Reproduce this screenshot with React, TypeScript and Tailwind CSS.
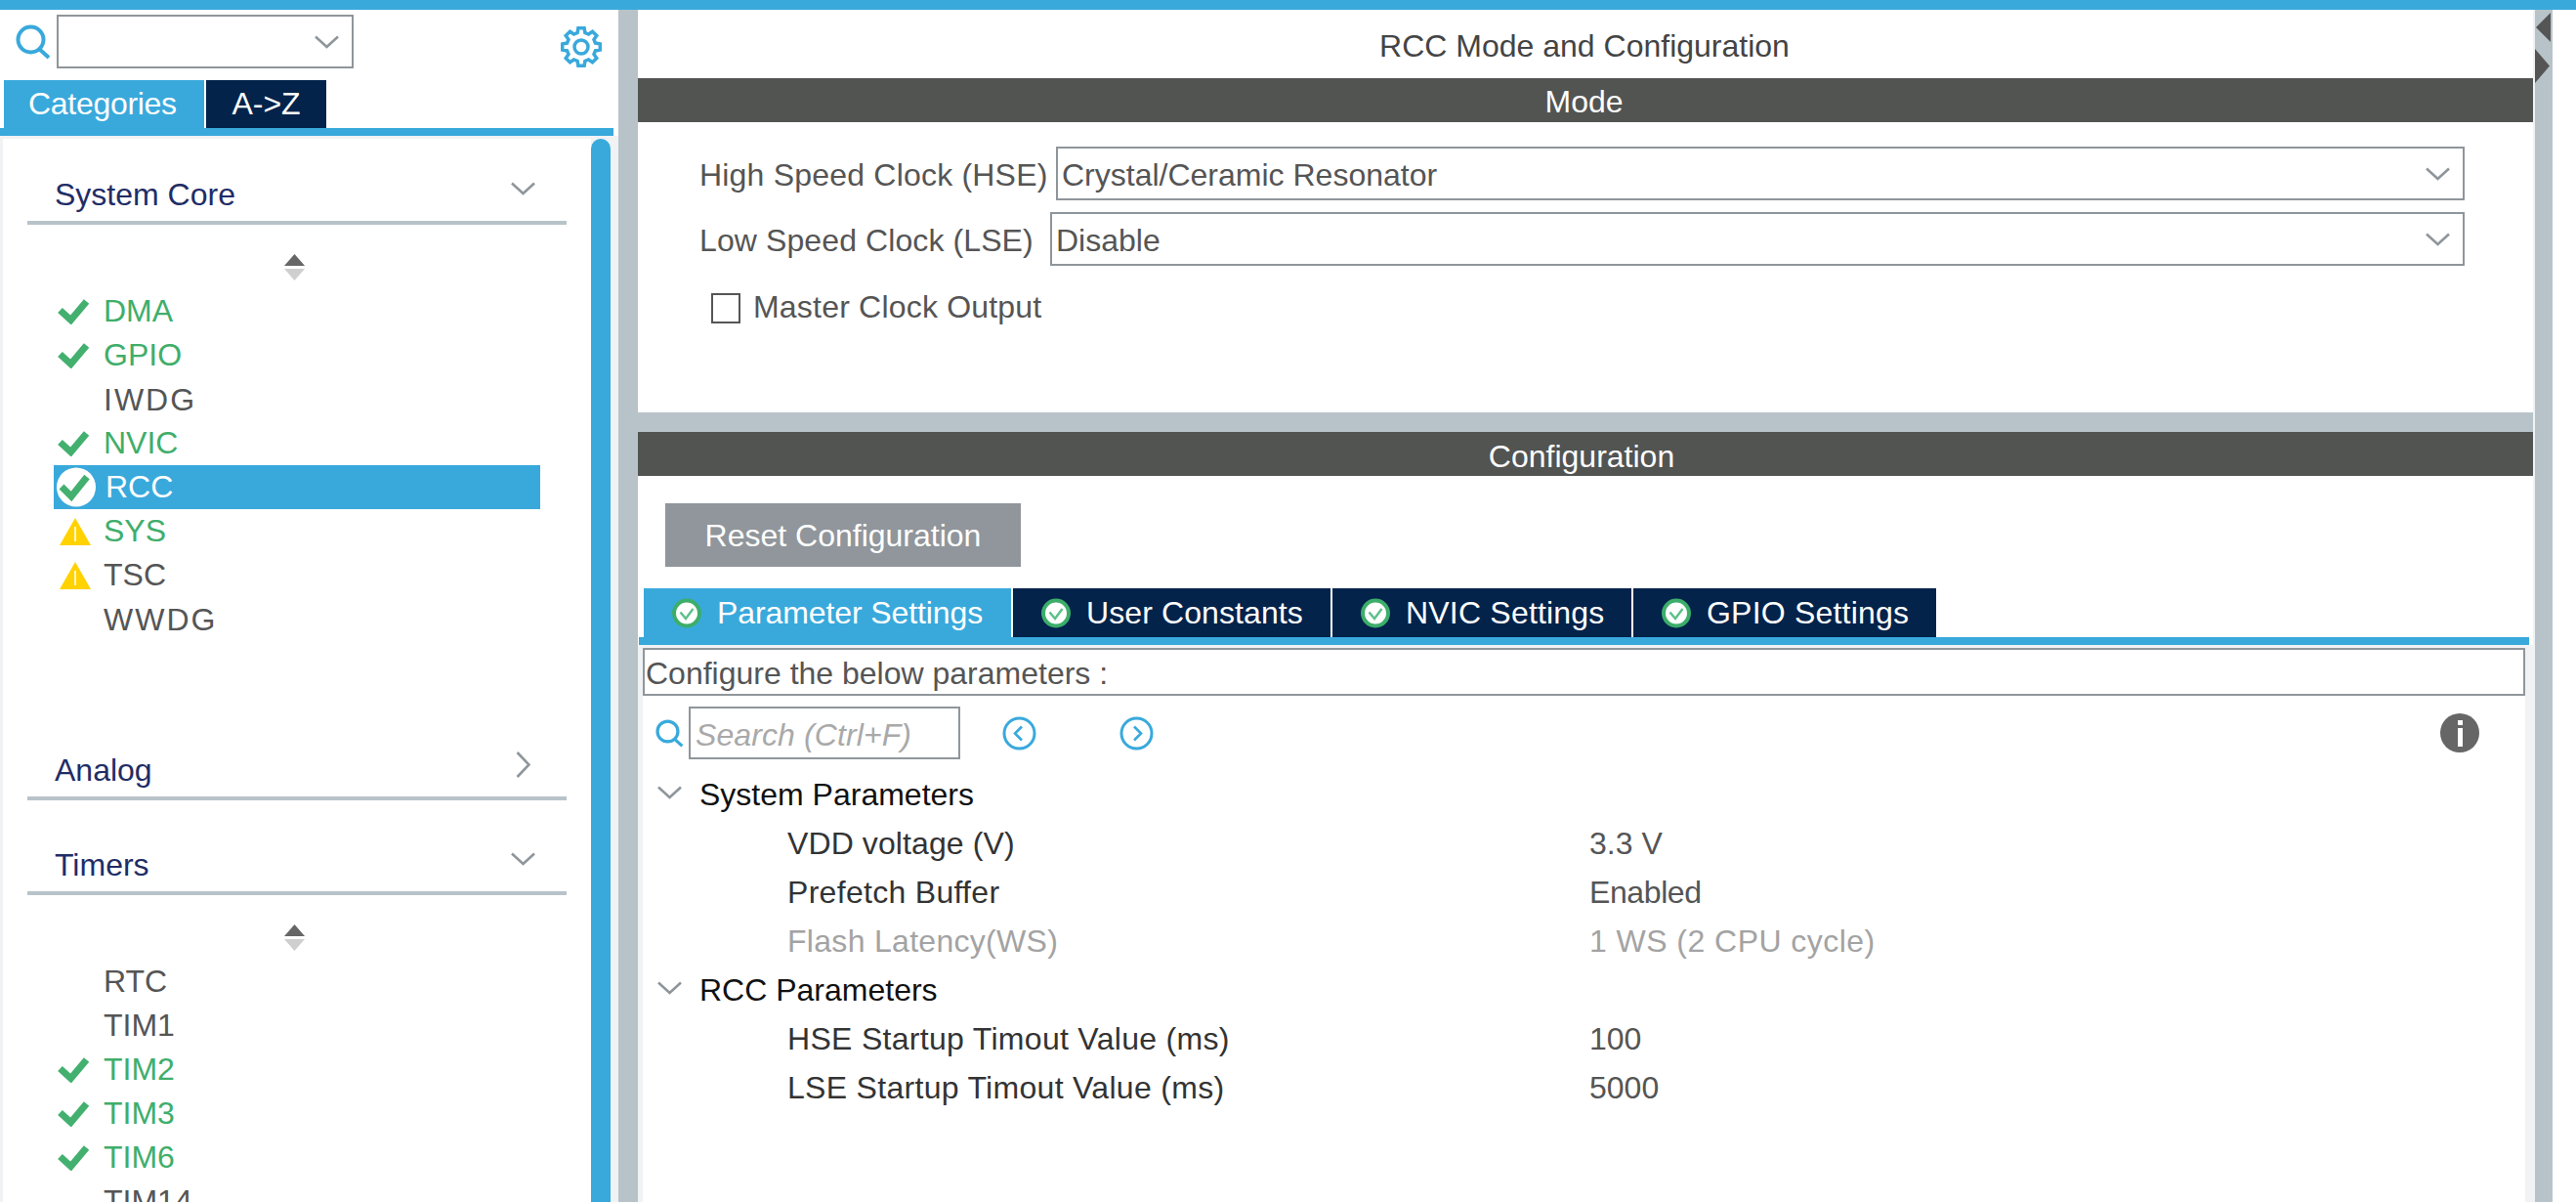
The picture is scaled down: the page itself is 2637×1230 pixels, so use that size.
const CHECK_GREEN = "#43b06f";

interface Peripheral {
  name: string;
  status?: "ok" | "warn" | "selected";
  green?: boolean;
  wide?: boolean;
}

const CORE: Peripheral[] = [
  { name: "DMA", status: "ok", green: true },
  { name: "GPIO", status: "ok", green: true },
  { name: "IWDG", wide: true },
  { name: "NVIC", status: "ok", green: true },
  { name: "RCC", status: "selected" },
  { name: "SYS", status: "warn", green: true },
  { name: "TSC", status: "warn" },
  { name: "WWDG", wide: true },
];

const TIMERS: Peripheral[] = [
  { name: "RTC" },
  { name: "TIM1" },
  { name: "TIM2", status: "ok", green: true },
  { name: "TIM3", status: "ok", green: true },
  { name: "TIM6", status: "ok", green: true },
  { name: "TIM14" },
];

// 8 tooth gear outline, centred on 21,21
const GEAR_POINTS = Array.from({ length: 8 }, (_, i) => {
  const a = (i * Math.PI) / 4;
  const at = (r: number, d: number) => {
    const t = a + (d * Math.PI) / 180;
    return `${(21 + r * Math.cos(t)).toFixed(1)},${(21 + r * Math.sin(t)).toFixed(1)}`;
  };
  return [at(15, -15), at(19.5, -9), at(19.5, 9), at(15, 15)].join(" ");
}).join(" ");

function Gear() {
  return (
    <svg viewBox="0 0 42 42" className="w-[42px] h-[42px] shrink-0" fill="none" stroke="#39a9dc" strokeWidth="3.5">
      <polygon points={GEAR_POINTS} />
      <circle cx="21" cy="21" r="7" />
    </svg>
  );
}

function Chevron({ className = "" }: { className?: string }) {
  return (
    <svg viewBox="0 0 25 14" className={`w-[25px] h-[14px] shrink-0 ${className}`} fill="none" stroke="#8f969b" strokeWidth="2.6">
      <path d="M1 1.5 12.5 12 24 1.5" />
    </svg>
  );
}

function SearchIcon({ className = "" }: { className?: string }) {
  return (
    <svg viewBox="0 0 36 36" className={`shrink-0 ${className}`} fill="none" stroke="#39a9dc">
      <circle cx="15.5" cy="15.5" r="13" strokeWidth="4" />
      <path d="M24 25 34 34" strokeWidth="4" />
    </svg>
  );
}

function Check() {
  return (
    <svg viewBox="0 0 32 26" className="w-[32px] h-[26px]" fill="none" stroke={CHECK_GREEN} strokeWidth="7">
      <path d="M2.5 11.5 13.5 21.5 29.5 2.5" />
    </svg>
  );
}

function Warn() {
  return (
    <svg viewBox="0 0 32 28" className="w-[32px] h-[28px]">
      <path d="M16 0 32 28H0Z" fill="#ffd200" />
      <path d="M16 9v15" stroke="#fff" strokeWidth="1.6" />
    </svg>
  );
}

function SelectedCheck() {
  return (
    <svg viewBox="0 0 40 41" className="w-[40px] h-[41px]" fill="none">
      <circle cx="20" cy="20.5" r="20" fill="#fff" />
      <path d="M5 20 15 30 31 10" stroke={CHECK_GREEN} strokeWidth="7" />
    </svg>
  );
}

function TabCheck() {
  return (
    <svg viewBox="0 0 30 31" className="w-[30px] h-[31px] shrink-0" fill="none">
      <circle cx="15" cy="15.5" r="13" fill="#fff" stroke="#3cae6a" strokeWidth="4" />
      <path d="M8.5 14.5 14 21 21.5 11" stroke="#5cc08a" strokeWidth="2.4" />
    </svg>
  );
}

function SortArrows() {
  return (
    <svg viewBox="0 0 21 27" className="w-[21px] h-[27px] block">
      <path d="M10.5 0 21 12H0Z" fill="#666" />
      <path d="M0 15H21L10.5 27Z" fill="#cfcfcf" />
    </svg>
  );
}

function Row({ item }: { item: Peripheral }) {
  const selected = item.status === "selected";
  const color = selected ? "text-white" : item.green ? "text-[#3fae6b]" : "text-[#555]";
  return (
    <div className={`flex items-center h-[45px] w-[498px] ${selected ? "bg-[#39a9dc]" : ""}`}>
      <div className={`w-[51px] shrink-0 flex items-center ${item.status === "warn" ? "pl-[6px]" : "pl-[4px]"}`}>
        {item.status === "ok" && <Check />}
        {item.status === "warn" && <Warn />}
        {selected && <div className="-ml-[1px]"><SelectedCheck /></div>}
      </div>
      <span className={`${color} ${selected ? "pl-[2px]" : ""} ${item.wide ? "tracking-[2px] pt-[2px]" : ""}`}>{item.name}</span>
    </div>
  );
}

function SectionHead({ title, open, className = "" }: { title: string; open: boolean; className?: string }) {
  return (
    <div className={`h-[50px] pb-[10px] pl-[28px] pr-[32px] border-b-4 border-[#b8c3c9] flex items-center justify-between text-[#1f2d66] ${className}`}>
      <span className="pt-[2px]">{title}</span>
      {open ? (
        <Chevron className="-mt-[10px]" />
      ) : (
        <svg viewBox="0 0 15 27" className="w-[15px] h-[27px] mr-[5px] -mt-[10px]" fill="none" stroke="#8f969b" strokeWidth="2.6">
          <path d="M1.5 1 13.5 13.5 1.5 26" />
        </svg>
      )}
    </div>
  );
}

function Sidebar() {
  return (
    <aside className="w-[633px] shrink-0 flex flex-col">
      <div className="h-[72px] flex items-start pt-[5px] pl-[16px]">
        <SearchIcon className="w-[36px] h-[36px] mt-[10px]" />
        <div className="ml-[6px] w-[304px] h-[55px] border-2 border-[#8f969b] flex items-center justify-end pr-[13px]">
          <Chevron />
        </div>
        <div className="ml-auto mr-[17px] mt-[12px]"><Gear /></div>
      </div>
      <div className="h-[49px] pl-[4px] flex gap-[2px] text-white">
        <div className="w-[205px] bg-[#39a9dc] flex items-center pl-[25px] -tracking-[0.3px]">Categories</div>
        <div className="w-[123px] bg-[#03234b] flex items-center justify-center">A-&gt;Z</div>
      </div>
      <div className="h-[8px] w-[628px] bg-[#39a9dc]" />
      <div className="flex-1 min-h-0 bg-[#f0f2f4] pt-[3px] pl-[3px] pr-[8px] flex">
        <div className="flex-1 bg-white overflow-hidden pl-[25px] pt-[38px]">
          <div className="w-[552px]">
            <SectionHead title="System Core" open />
            <div className="mt-[30px] mb-[9px] pl-[263px]"><SortArrows /></div>
            <div className="pl-[27px]">
              {CORE.map((p) => <Row key={p.name} item={p} />)}
            </div>
            <SectionHead title="Analog" open={false} className="mt-[113px]" />
            <SectionHead title="Timers" open className="mt-[47px]" />
            <div className="mt-[30px] mb-[9px] pl-[263px]"><SortArrows /></div>
            <div className="pl-[27px]">
              {TIMERS.map((p) => <Row key={p.name} item={p} />)}
            </div>
          </div>
        </div>
        <div className="w-[20px] bg-[#39a9dc] rounded-t-[10px]" />
      </div>
    </aside>
  );
}

function SelectBox({ value, className = "" }: { value: string; className?: string }) {
  return (
    <div className={`h-[55px] border-2 border-[#8f969b] flex items-center justify-between pl-[4px] pr-[13px] ${className}`}>
      <span className="pt-[3px]">{value}</span>
      <Chevron />
    </div>
  );
}

const TABS = [
  { label: "Parameter Settings", width: "w-[376px]", bg: "bg-[#39a9dc]", text: "-tracking-[0.1px]" },
  { label: "User Constants", width: "w-[325px]", bg: "bg-[#03234b]", text: "tracking-[0.1px]" },
  { label: "NVIC Settings", width: "w-[306px]", bg: "bg-[#03234b]", text: "tracking-[0.2px]" },
  { label: "GPIO Settings", width: "w-[310px]", bg: "bg-[#03234b]", text: "tracking-[0.2px]" },
];

function ParamRow({ label, value, muted, labelClass = "tracking-[0.3px]", valueClass = "" }: { label: string; value: string; muted?: boolean; labelClass?: string; valueClass?: string }) {
  return (
    <div className={`h-[50px] flex items-center pl-[148px] ${muted ? "text-[#a3a3a3]" : "text-[#333]"}`}>
      <span className={`w-[821px] ${labelClass}`}>{label}</span>
      <span className={`${muted ? "" : "text-[#555]"} ${valueClass}`}>{value}</span>
    </div>
  );
}

function GroupRow({ label }: { label: string }) {
  return (
    <div className="h-[50px] flex items-center pl-[15px] gap-[18px] text-[#111]">
      <Chevron className="-mt-[4px]" />
      <span>{label}</span>
    </div>
  );
}

function CircleArrow({ dir }: { dir: "left" | "right" }) {
  return (
    <svg viewBox="0 0 35 35" className="w-[35px] h-[35px] shrink-0" fill="none" stroke="#39a9dc">
      <circle cx="17.5" cy="17.5" r="15.5" strokeWidth="3" />
      <path d={dir === "left" ? "M20 10.5 13 17.5 20 24.5" : "M15 10.5 22 17.5 15 24.5"} strokeWidth="2.6" />
    </svg>
  );
}

function Main() {
  return (
    <main className="w-[1942px] shrink-0 border-r-2 border-[#f0f2f4] flex flex-col">
      <div className="h-[70px] pt-[4px] pr-[2px] flex items-center justify-center text-[#444]">RCC Mode and Configuration</div>
      <div className="h-[45px] pt-[3px] pr-[3px] bg-[#525452] text-white flex items-center justify-center">Mode</div>
      <section className="h-[297px] pt-[25px] pr-[70px] text-[#555]">
        <div className="flex items-center pl-[63px]">
          <span className="w-[365px] shrink-0 pt-[3px] tracking-[0.2px]">High Speed Clock (HSE)</span>
          <SelectBox value="Crystal/Ceramic Resonator" className="flex-1" />
        </div>
        <div className="mt-[12px] flex items-center pl-[63px]">
          <span className="w-[359px] shrink-0 pt-[3px] tracking-[0.1px]">Low Speed Clock (LSE)</span>
          <SelectBox value="Disable" className="flex-1" />
        </div>
        <div className="mt-[25px] flex items-center pl-[75px] gap-[13px]">
          <div className="w-[30px] h-[31px] border-2 border-[#555]" />
          <span className="-mt-[1px] tracking-[0.2px]">Master Clock Output</span>
        </div>
      </section>
      <div className="h-[20px] bg-[#b8c3c9]" />
      <div className="h-[45px] pt-[5px] pr-[8px] bg-[#525452] text-white flex items-center justify-center">Configuration</div>
      <div className="flex-1 min-h-0 flex flex-col overflow-hidden">
        <div className="mt-[28px] ml-[28px] w-[364px] h-[65px] pt-[2px] bg-[#90969b] text-white flex items-center justify-center">Reset Configuration</div>
        <div className="mt-[22px] ml-[6px] h-[50px] flex gap-[2px] text-white">
          {TABS.map((t) => (
            <div key={t.label} className={`${t.width} ${t.bg} flex items-center pl-[29px] gap-[16px]`}>
              <TabCheck />
              <span className={t.text}>{t.label}</span>
            </div>
          ))}
        </div>
        <div className="h-[8px] ml-[1px] mr-[4px] bg-[#39a9dc]" />
        <div className="flex-1 bg-[#f0f2f4] pt-[3px] pl-[5px] pr-[8px]">
          <div className="h-full bg-white">
            <div className="h-[49px] border-2 border-[#8f969b] flex items-center pl-[1px] pt-[4px] text-[#555]">Configure the below parameters :</div>
            <div className="mt-[11px] h-[54px] flex items-center pl-[13px]">
              <SearchIcon className="w-[29px] h-[29px]" />
              <div className="ml-[5px] w-[278px] h-[54px] border-2 border-[#8f969b] flex items-center pl-[5px] pt-[4px] italic text-[#a9a9a9] tracking-[0.1px]">Search (Ctrl+F)</div>
              <div className="ml-[43px]"><CircleArrow dir="left" /></div>
              <div className="ml-[85px]"><CircleArrow dir="right" /></div>
              <div className="ml-auto mr-[47px] w-[40px] h-[40px] rounded-full bg-[#666] flex flex-col items-center justify-center gap-[3px]">
                <div className="w-[5px] h-[5px] bg-white" />
                <div className="w-[5px] h-[19px] bg-white" />
              </div>
            </div>
            <div className="mt-[11px]">
              <GroupRow label="System Parameters" />
              <ParamRow label="VDD voltage (V)" value="3.3 V" labelClass="tracking-[0.1px]" />
              <ParamRow label="Prefetch Buffer" value="Enabled" valueClass="-tracking-[0.4px]" />
              <ParamRow label="Flash Latency(WS)" value="1 WS (2 CPU cycle)" muted valueClass="tracking-[0.45px]" />
              <GroupRow label="RCC Parameters" />
              <ParamRow label="HSE Startup Timout Value (ms)" value="100" />
              <ParamRow label="LSE Startup Timout Value (ms)" value="5000" />
            </div>
          </div>
        </div>
      </div>
    </main>
  );
}

export default function App() {
  return (
    <div className="w-[2637px] h-[1230px] overflow-hidden bg-white flex flex-col [font-family:'Liberation_Sans',Arial,sans-serif] text-[32px] leading-[37px]">
      <div className="h-[10px] shrink-0 bg-[#39a9dc]" />
      <div className="flex-1 min-h-0 flex">
        <Sidebar />
        <div className="w-[20px] shrink-0 bg-[#b8c3c9]" />
        <Main />
        <div className="w-[18px] shrink-0 bg-[#b8c3c9] pt-[3px] flex flex-col gap-[7px]">
          <svg viewBox="0 0 15 30" className="w-[15px] h-[30px] ml-[1px]"><path d="M15 0V30L0 15Z" fill="#555" /></svg>
          <svg viewBox="0 0 15 35" className="w-[15px] h-[35px]"><path d="M0 0V35L15 17.5Z" fill="#555" /></svg>
        </div>
      </div>
    </div>
  );
}
